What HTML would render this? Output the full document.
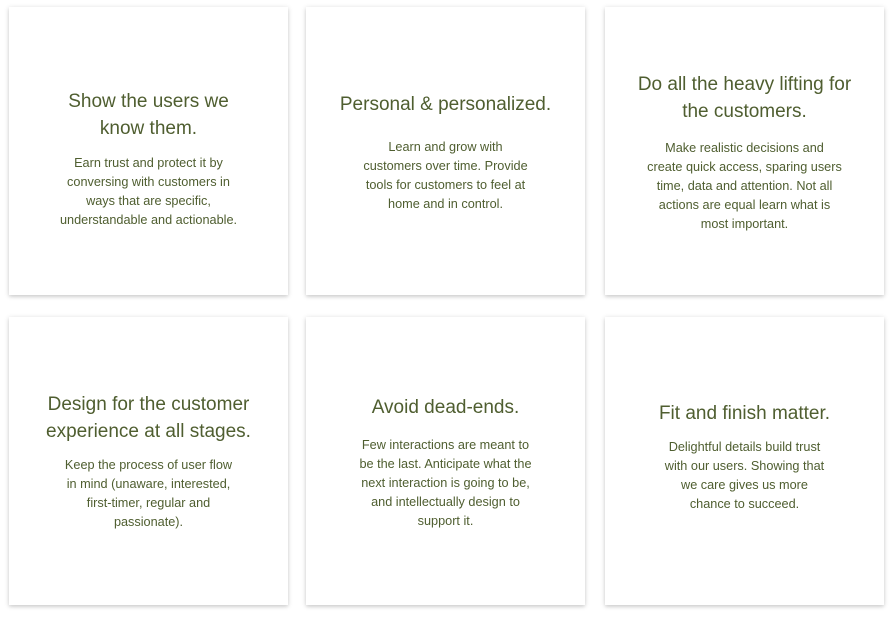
<!DOCTYPE html>
<html><head><meta charset="utf-8"><style>
html,body{margin:0;padding:0;background:#fff;width:893px;height:617px;overflow:hidden;font-family:"Liberation Sans",sans-serif;color:#4f5e30}
.c{position:absolute;width:279px;height:288px;background:#fff;box-shadow:0 1px 5px rgba(0,0,0,.16),0 2px 3px rgba(0,0,0,.08)}
.t{position:absolute;left:0;right:0;text-align:center;font-size:19px;line-height:27px;white-space:nowrap}
.b{position:absolute;left:0;right:0;text-align:center;font-size:12.7px;line-height:19px;white-space:nowrap}
</style></head><body>
<div class="c" style="left:9px;top:7px"><div class="t" style="top:81px">Show the users we<br>know them.</div><div class="b" style="top:147px">Earn trust and protect it by<br>conversing with customers in<br>ways that are specific,<br>understandable and actionable.</div></div>
<div class="c" style="left:306px;top:7px"><div class="t" style="top:84px">Personal &amp; personalized.</div><div class="b" style="top:131px">Learn and grow with<br>customers over time. Provide<br>tools for customers to feel at<br>home and in control.</div></div>
<div class="c" style="left:605px;top:7px"><div class="t" style="top:64px">Do all the heavy lifting for<br>the customers.</div><div class="b" style="top:132px">Make realistic decisions and<br>create quick access, sparing users<br>time, data and attention. Not all<br>actions are equal learn what is<br>most important.</div></div>
<div class="c" style="left:9px;top:317px"><div class="t" style="top:74px">Design for the customer<br>experience at all stages.</div><div class="b" style="top:139px">Keep the process of user flow<br>in mind (unaware, interested,<br>first-timer, regular and<br>passionate).</div></div>
<div class="c" style="left:306px;top:317px"><div class="t" style="top:77px">Avoid dead-ends.</div><div class="b" style="top:119px">Few interactions are meant to<br>be the last. Anticipate what the<br>next interaction is going to be,<br>and intellectually design to<br>support it.</div></div>
<div class="c" style="left:605px;top:317px"><div class="t" style="top:83px">Fit and finish matter.</div><div class="b" style="top:121px">Delightful details build trust<br>with our users. Showing that<br>we care gives us more<br>chance to succeed.</div></div>
</body></html>
